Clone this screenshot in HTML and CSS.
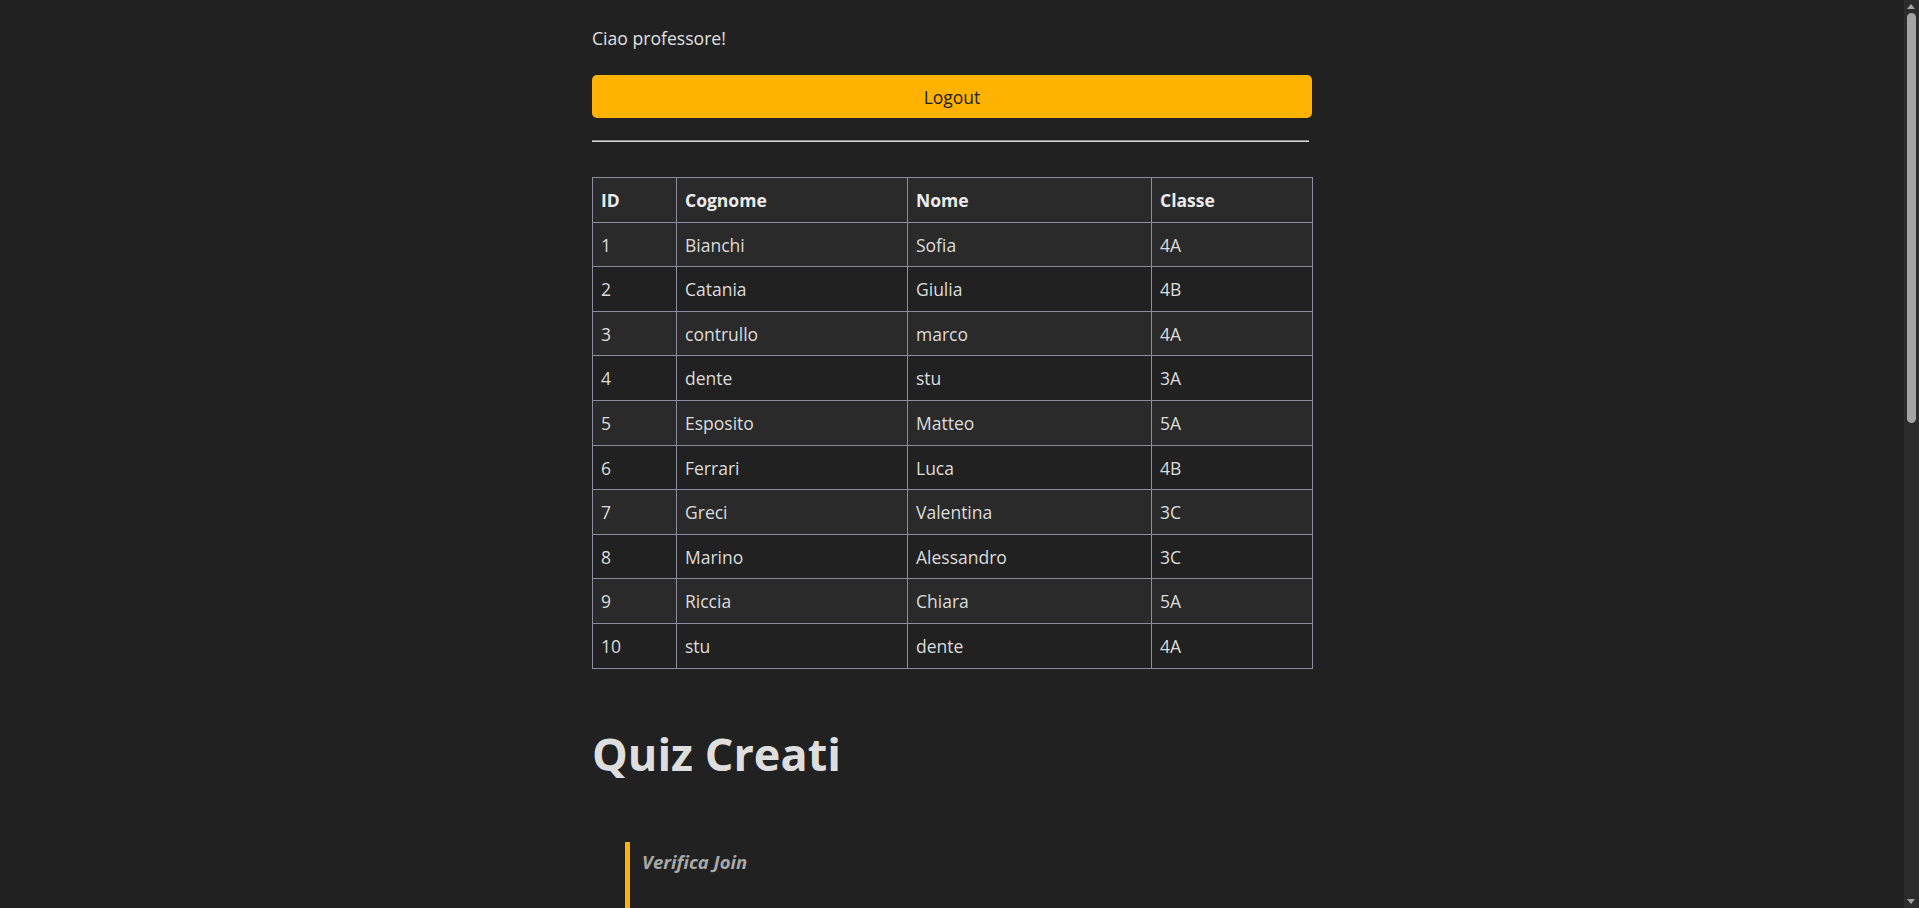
FILE: index.html
```html
<!DOCTYPE html>
<html lang="it">
<head>
<meta charset="utf-8">
<title>Area professore</title>
<link rel="stylesheet" href="styles.css">
</head>
<body>
<main class="page">
  <p class="greeting">Ciao professore!</p>
  <button class="logout" type="button">Logout</button>
  <hr class="divider">
  <table class="students">
    <colgroup>
      <col class="col-id">
      <col class="col-cognome">
      <col class="col-nome">
      <col class="col-classe">
    </colgroup>
    <thead>
      <tr><th>ID</th><th>Cognome</th><th>Nome</th><th>Classe</th></tr>
    </thead>
    <tbody>
      <tr><td>1</td><td>Bianchi</td><td>Sofia</td><td>4A</td></tr>
      <tr><td>2</td><td>Catania</td><td>Giulia</td><td>4B</td></tr>
      <tr><td>3</td><td>contrullo</td><td>marco</td><td>4A</td></tr>
      <tr><td>4</td><td>dente</td><td>stu</td><td>3A</td></tr>
      <tr><td>5</td><td>Esposito</td><td>Matteo</td><td>5A</td></tr>
      <tr><td>6</td><td>Ferrari</td><td>Luca</td><td>4B</td></tr>
      <tr><td>7</td><td>Greci</td><td>Valentina</td><td>3C</td></tr>
      <tr><td>8</td><td>Marino</td><td>Alessandro</td><td>3C</td></tr>
      <tr><td>9</td><td>Riccia</td><td>Chiara</td><td>5A</td></tr>
      <tr><td>10</td><td>stu</td><td>dente</td><td>4A</td></tr>
    </tbody>
  </table>
  <h1 class="section-title">Quiz Creati</h1>
  <section class="quiz-list">
    <article class="quiz-card">
      <h3 class="quiz-title">Verifica Join</h3>
    </article>
  </section>
</main>
<div class="scrollbar" aria-hidden="true">
  <span class="scroll-arrow scroll-up"></span>
  <span class="scroll-thumb"></span>
  <span class="scroll-arrow scroll-down"></span>
</div>
</body>
</html>
```

FILE: styles.css
```css
html {
  color-scheme: dark;
  background: #212121;
}

body {
  margin: 0;
  padding-right: 15px;
  background: #212121;
  color: #dcdcdc;
  font-family: "Segoe UI", "Open Sans", "Noto Sans", sans-serif;
  font-size: 17px;
}

.page {
  width: 720px;
  margin: 0 auto;
  padding: 26px 0 60px;
}

.greeting {
  margin: 0;
  font-size: 17.6px;
  line-height: 24px;
  color: #e0e0e0;
}

.logout {
  display: block;
  width: 100%;
  height: 43px;
  margin-top: 25px;
  border: none;
  border-radius: 5px;
  background: #ffb300;
  color: #222;
  font-family: inherit;
  font-size: 17.5px;
  cursor: pointer;
}

.divider {
  margin: 22px 3px 0 0;
  border: none;
  border-top: 1px solid #8f8f8f;
  border-bottom: 1px solid #d6d6d6;
  height: 0;
}

.students {
  width: 720px;
  margin-top: 35px;
  border-collapse: collapse;
  table-layout: fixed;
  font-size: 17.5px;
}

.col-id { width: 84px; }
.col-cognome { width: 231px; }
.col-nome { width: 244px; }
.col-classe { width: 161px; }

.students th,
.students td {
  border: 1px solid #8c8ca0;
  padding: 10px 8px 8px;
  line-height: 25.6px;
  text-align: left;
}

.students th {
  font-weight: 700;
  color: #ebebeb;
  background: #2a2a2a;
}

.students tbody tr:nth-child(odd) {
  background: #2a2a2a;
}

.students tbody tr:nth-child(even) {
  background: #212121;
}

.section-title {
  margin: 57px 0 0;
  font-size: 45px;
  line-height: 56px;
  font-weight: 700;
  color: #dedede;
}

.quiz-list {
  margin-top: 60px;
  padding-left: 33px;
}

.quiz-card {
  min-height: 1040px;
  border-left: 5px solid #ffb300;
  padding: 8px 12px;
}

.quiz-title {
  margin: 0;
  font-size: 18.5px;
  line-height: 24px;
  font-style: italic;
  font-weight: 700;
  color: #a9a9a9;
}

/* simulated browser scrollbar (overlays the right edge of the viewport) */
.scrollbar {
  position: fixed;
  top: 0;
  right: 0;
  width: 15px;
  height: 100vh;
  background: #2c2c2c;
}

.scroll-thumb {
  position: absolute;
  top: 13px;
  left: 3px;
  width: 9px;
  height: 410px;
  border-radius: 5px;
  background: #a3a3a3;
}

.scroll-arrow {
  position: absolute;
  left: 3px;
  width: 0;
  height: 0;
  border-left: 4.5px solid transparent;
  border-right: 4.5px solid transparent;
}

.scroll-up {
  top: 4px;
  border-bottom: 5px solid #a3a3a3;
}

.scroll-down {
  bottom: 4px;
  border-top: 5px solid #a3a3a3;
}
```
